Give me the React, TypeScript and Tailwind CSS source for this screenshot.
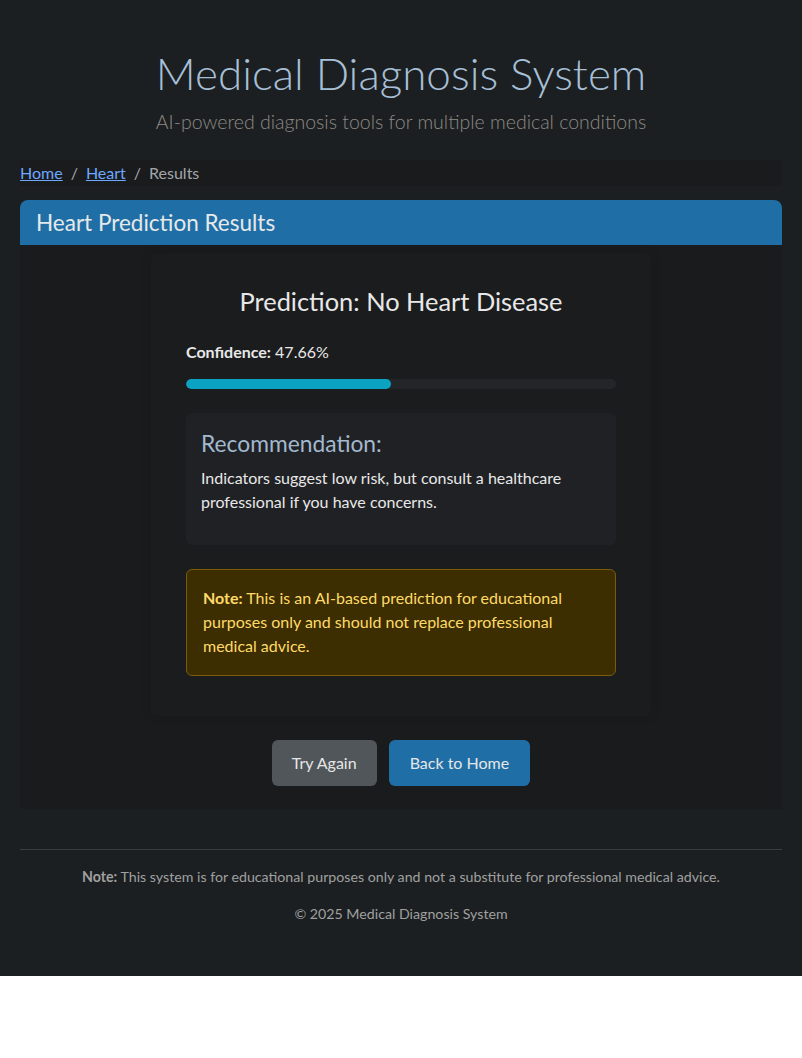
import React from "react";

const font = { fontFamily: "Lato, 'Noto Sans', sans-serif" };

export default function App() {
  return (
    <div style={font} className="w-full">
      <div className="bg-[#1b1f21] px-5 pb-[52px]">
        <header className="pt-[47px] text-center">
          <h1 className="text-[44px] leading-[1.2] font-light text-[#a7bfd6]">Medical Diagnosis System</h1>
          <p className="mt-[7px] text-[19.5px] leading-[1.5] font-light text-[#8f8a85]">
            AI-powered diagnosis tools for multiple medical conditions
          </p>
        </header>

        <nav className="mt-[24px] flex h-[26px] items-center bg-[#191b1d] text-[16px] text-[#a3a7aa]">
          <a href="#" className="text-[#6ea8fe] underline">Home</a>
          <span className="px-2">/</span>
          <a href="#" className="text-[#6ea8fe] underline">Heart</a>
          <span className="px-2">/</span>
          <span>Results</span>
        </nav>

        <section className="mt-[14px] rounded-t-lg bg-[#1a1b1d]">
          <div className="flex h-[45px] items-center rounded-t-lg bg-[#1f6fa6] px-4">
            <h4 className="text-[22.5px] text-[#e6e8ea]">Heart Prediction Results</h4>
          </div>
          <div className="flex flex-col items-center pt-[8px] pb-[23px]">
            <div className="w-[500px] rounded-md bg-[#1b1c1e] px-[35px] pt-[33px] pb-[40px] shadow-[0_0_12px_rgba(0,0,0,0.12)]">
              <h3 className="text-center text-[25.4px] leading-[1.2] text-[#e8e8e8]">Prediction: No Heart Disease</h3>
              <p className="mt-[23px] text-[16px] leading-[24px] text-[#e8e8e8]">
                <strong>Confidence:</strong> 47.66%
              </p>
              <div className="mt-[15px] h-[10px] w-full overflow-hidden rounded-full bg-[#222628]">
                <div className="h-full rounded-full bg-[#0ba3c2]" style={{ width: "47.66%" }} />
              </div>
              <div className="mt-[24px] rounded-md bg-[#202124] px-[15px] pt-[17px] pb-[31px]">
                <h4 className="text-[22.8px] leading-[1.2] text-[#a2b9cf]">Recommendation:</h4>
                <p className="mt-[9px] text-[16px] leading-[24px] text-[#e8e8e8]">
                  Indicators suggest low risk, but consult a healthcare professional if you have concerns.
                </p>
              </div>
              <div className="mt-[24px] rounded-md border border-[#7a5c08] bg-[#3c2e00] px-[16px] pt-[16px] pb-[17px] text-[16px] leading-[24px] text-[#ffda6a]">
                <strong>Note:</strong> This is an AI-based prediction for educational purposes only and should not replace professional medical advice.
              </div>
            </div>
            <div className="mt-[24px] flex gap-[12px]">
              <button className="h-[46px] rounded-md bg-[#50565a] px-[20px] text-[16px] text-[#e6e6e6]">Try Again</button>
              <button className="h-[46px] rounded-md bg-[#1f6fa6] px-[21px] text-[16px] text-[#e6e6e6]">Back to Home</button>
            </div>
          </div>
        </section>

        <footer className="mt-[40px] border-t border-[#3a3e41] pt-[16px] text-center text-[14.2px] leading-[21px] text-[#a0a0a0]">
          <p><strong>Note:</strong> This system is for educational purposes only and not a substitute for professional medical advice.</p>
          <p className="mt-[16px]">© 2025 Medical Diagnosis System</p>
        </footer>
      </div>
    </div>
  );
}
